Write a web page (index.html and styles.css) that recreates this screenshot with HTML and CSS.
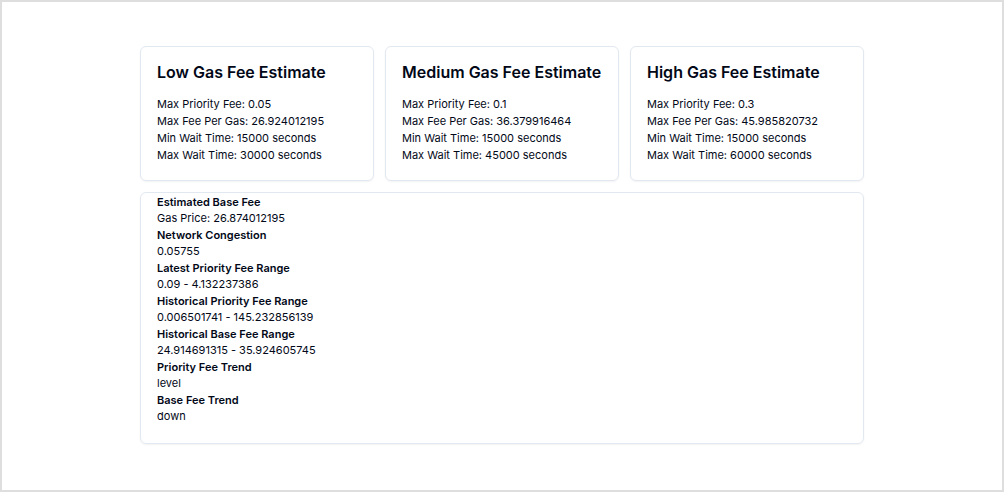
FILE: index.html
```html
<!DOCTYPE html>
<html lang="en">
<head>
<meta charset="utf-8">
<meta name="viewport" content="width=device-width, initial-scale=1">
<title>Gas Fee Estimates</title>
<link rel="stylesheet" href="styles.css">
</head>
<body>
<main class="page">
  <div class="estimates">
    <section class="card estimate">
      <h2 class="card-title">Low Gas Fee Estimate</h2>
      <div class="details">
        <p>Max Priority Fee: 0.05</p>
        <p>Max Fee Per Gas: 26.924012195</p>
        <p>Min Wait Time: 15000 seconds</p>
        <p>Max Wait Time: 30000 seconds</p>
      </div>
    </section>
    <section class="card estimate">
      <h2 class="card-title">Medium Gas Fee Estimate</h2>
      <div class="details">
        <p>Max Priority Fee: 0.1</p>
        <p>Max Fee Per Gas: 36.379916464</p>
        <p>Min Wait Time: 15000 seconds</p>
        <p>Max Wait Time: 45000 seconds</p>
      </div>
    </section>
    <section class="card estimate">
      <h2 class="card-title">High Gas Fee Estimate</h2>
      <div class="details">
        <p>Max Priority Fee: 0.3</p>
        <p>Max Fee Per Gas: 45.985820732</p>
        <p>Min Wait Time: 15000 seconds</p>
        <p>Max Wait Time: 60000 seconds</p>
      </div>
    </section>
  </div>
  <section class="card summary">
    <dl class="facts">
      <dt>Estimated Base Fee</dt><dd>Gas Price: 26.874012195</dd>
      <dt>Network Congestion</dt><dd>0.05755</dd>
      <dt>Latest Priority Fee Range</dt><dd>0.09 - 4.132237386</dd>
      <dt>Historical Priority Fee Range</dt><dd>0.006501741 - 145.232856139</dd>
      <dt>Historical Base Fee Range</dt><dd>24.914691315 - 35.924605745</dd>
      <dt>Priority Fee Trend</dt><dd>level</dd>
      <dt>Base Fee Trend</dt><dd>down</dd>
    </dl>
  </section>
</main>
</body>
</html>
```
FILE: styles.css
```css
* {
  box-sizing: border-box;
}

body {
  min-height: 100vh;
  margin: 0;
  border: 2px solid #dedede;
  background: #fff;
  color: #020817;
  font-family: Inter, "Liberation Sans", sans-serif;
  font-size: 11px;
  line-height: 17px;
}

.page {
  display: grid;
  gap: 11px;
  max-width: 724px;
  margin: 0 auto;
  padding: 44px 0;
}

.estimates {
  display: grid;
  grid-template-columns: repeat(3, minmax(0, 1fr));
  gap: 11px;
}

.card {
  padding: 0 16px 16px;
  border: 1px solid #e2e8f0;
  border-radius: 6px;
  box-shadow: 0 1px 2px rgb(0 0 0 / 5%);
}

.estimate {
  padding-top: 16px;
}

.summary {
  padding-top: 1px;
  padding-bottom: 18px;
}

.card-title {
  margin: 0 0 14px;
  font-size: 16px;
  font-weight: 600;
  line-height: 19px;
}

.details p,
.facts,
.facts dd {
  margin: 0;
}

.facts dt {
  font-weight: 600;
  line-height: 16px;
}
```
